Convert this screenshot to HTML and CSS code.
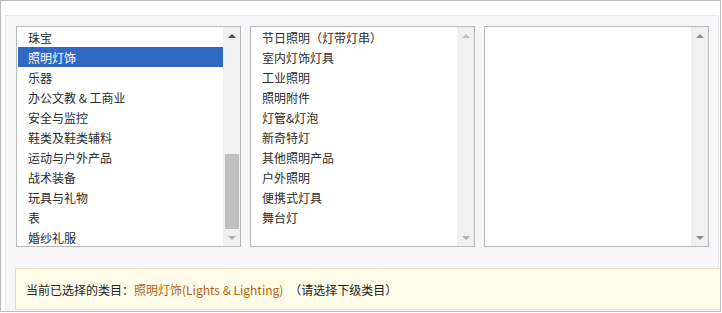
FILE: index.html
```html
<!DOCTYPE html>
<html lang="zh-CN">
<head>
<meta charset="utf-8">
<title>类目选择</title>
<link rel="stylesheet" href="styles.css">
</head>
<body>
<div class="frame">
  <div class="panel">
    <div class="lists">
      <div class="listbox">
        <ul class="items">
          <li>珠宝</li>
          <li class="selected">照明灯饰</li>
          <li>乐器</li>
          <li>办公文教 &amp; 工商业</li>
          <li>安全与监控</li>
          <li>鞋类及鞋类辅料</li>
          <li>运动与户外产品</li>
          <li>战术装备</li>
          <li>玩具与礼物</li>
          <li>表</li>
          <li>婚纱礼服</li>
        </ul>
        <div class="scrollbar">
          <div class="btn"><span class="arrow-up dark"></span></div>
          <div class="track"><div class="thumb"></div></div>
          <div class="btn"><span class="arrow-down light"></span></div>
        </div>
      </div>
      <div class="listbox">
        <ul class="items">
          <li>节日照明（灯带灯串）</li>
          <li>室内灯饰灯具</li>
          <li>工业照明</li>
          <li>照明附件</li>
          <li>灯管&amp;灯泡</li>
          <li>新奇特灯</li>
          <li>其他照明产品</li>
          <li>户外照明</li>
          <li>便携式灯具</li>
          <li>舞台灯</li>
        </ul>
        <div class="scrollbar">
          <div class="btn"><span class="arrow-up light"></span></div>
          <div class="track"></div>
          <div class="btn"><span class="arrow-down light"></span></div>
        </div>
      </div>
      <div class="listbox">
        <ul class="items"></ul>
        <div class="scrollbar">
          <div class="btn"><span class="arrow-up mid"></span></div>
          <div class="track"></div>
          <div class="btn"><span class="arrow-down mid"></span></div>
        </div>
      </div>
    </div>
    <div class="current">
      <span class="label">当前已选择的类目：</span><span class="chosen">照明灯饰(Lights &amp; Lighting)</span><span class="hint">（请选择下级类目）</span>
    </div>
  </div>
</div>
</body>
</html>
```

FILE: styles.css
```css
html, body {
  margin: 0;
  padding: 0;
  background: #ffffff;
}

body {
  font-family: "Noto Sans CJK SC", "Liberation Sans", sans-serif;
  font-size: 12px;
  color: #333333;
}

.frame {
  box-sizing: border-box;
  width: 721px;
  height: 312px;
  border: 1px solid #bdbdbd;
  padding: 14px 1px 0 4px;
  display: flex;
  flex-direction: column;
  background: #ffffff;
}

.panel {
  flex: 1;
  display: flex;
  flex-direction: column;
  border-top: 1px solid #e7e8ec;
  border-left: 1px solid #e7e8ec;
  border-right: 1px solid #e7e8ec;
  background: #f7f7f9;
  padding: 10px 0 0 10px;
}

.lists {
  display: flex;
  gap: 9px;
}

.listbox {
  box-sizing: border-box;
  width: 225px;
  height: 221px;
  border: 1px solid #b8b8b8;
  padding: 0 0 0 1px;
  background: #ffffff;
  display: flex;
  overflow: hidden;
}

.items {
  list-style: none;
  margin: 0;
  padding: 0;
  flex: 1;
  min-width: 0;
}

.items li {
  box-sizing: border-box;
  height: 20px;
  line-height: 19px;
  padding-top: 1px;
  padding-left: 10px;
  white-space: nowrap;
  color: #2b2b2b;
}

.items li.selected {
  background: #3168c5;
  color: #ffffff;
}

.scrollbar {
  width: 17px;
  display: flex;
  flex-direction: column;
  background: #f0f0f0;
}

.btn {
  height: 17px;
  display: flex;
  align-items: center;
  justify-content: center;
}

.track {
  flex: 1;
  display: flex;
  flex-direction: column;
  justify-content: flex-end;
}

.thumb {
  height: 75px;
  margin: 0 1px 0 2px;
  background: #c1c1c1;
}

.arrow-up,
.arrow-down {
  width: 0;
  height: 0;
  border-left: 4px solid transparent;
  border-right: 4px solid transparent;
}

.arrow-up {
  border-bottom: 4px solid #505050;
}

.arrow-down {
  border-top: 4px solid #a8a8a8;
}

.arrow-up.dark { border-bottom-color: #4a4a4a; }
.arrow-down.light { border-top-color: #b0b0b0; }
.arrow-up.light { border-bottom-color: #bdbdbd; }
.arrow-up.mid { border-bottom-color: #8c8c8c; }
.arrow-down.mid { border-top-color: #8c8c8c; }

.current {
  box-sizing: border-box;
  height: 42px;
  margin-top: 21px;
  margin-left: -1px;
  margin-right: -2px;
  border-top: 1px solid #eedcb2;
  border-bottom: 1px solid #eedcb2;
  border-left: 1px solid #eedcb2;
  background: #fffde9;
  padding-left: 10px;
  display: flex;
  align-items: center;
  white-space: nowrap;
  color: #222222;
}

.chosen {
  color: #b6620f;
}

.hint {
  margin-left: 6px;
  color: #222222;
}
```
